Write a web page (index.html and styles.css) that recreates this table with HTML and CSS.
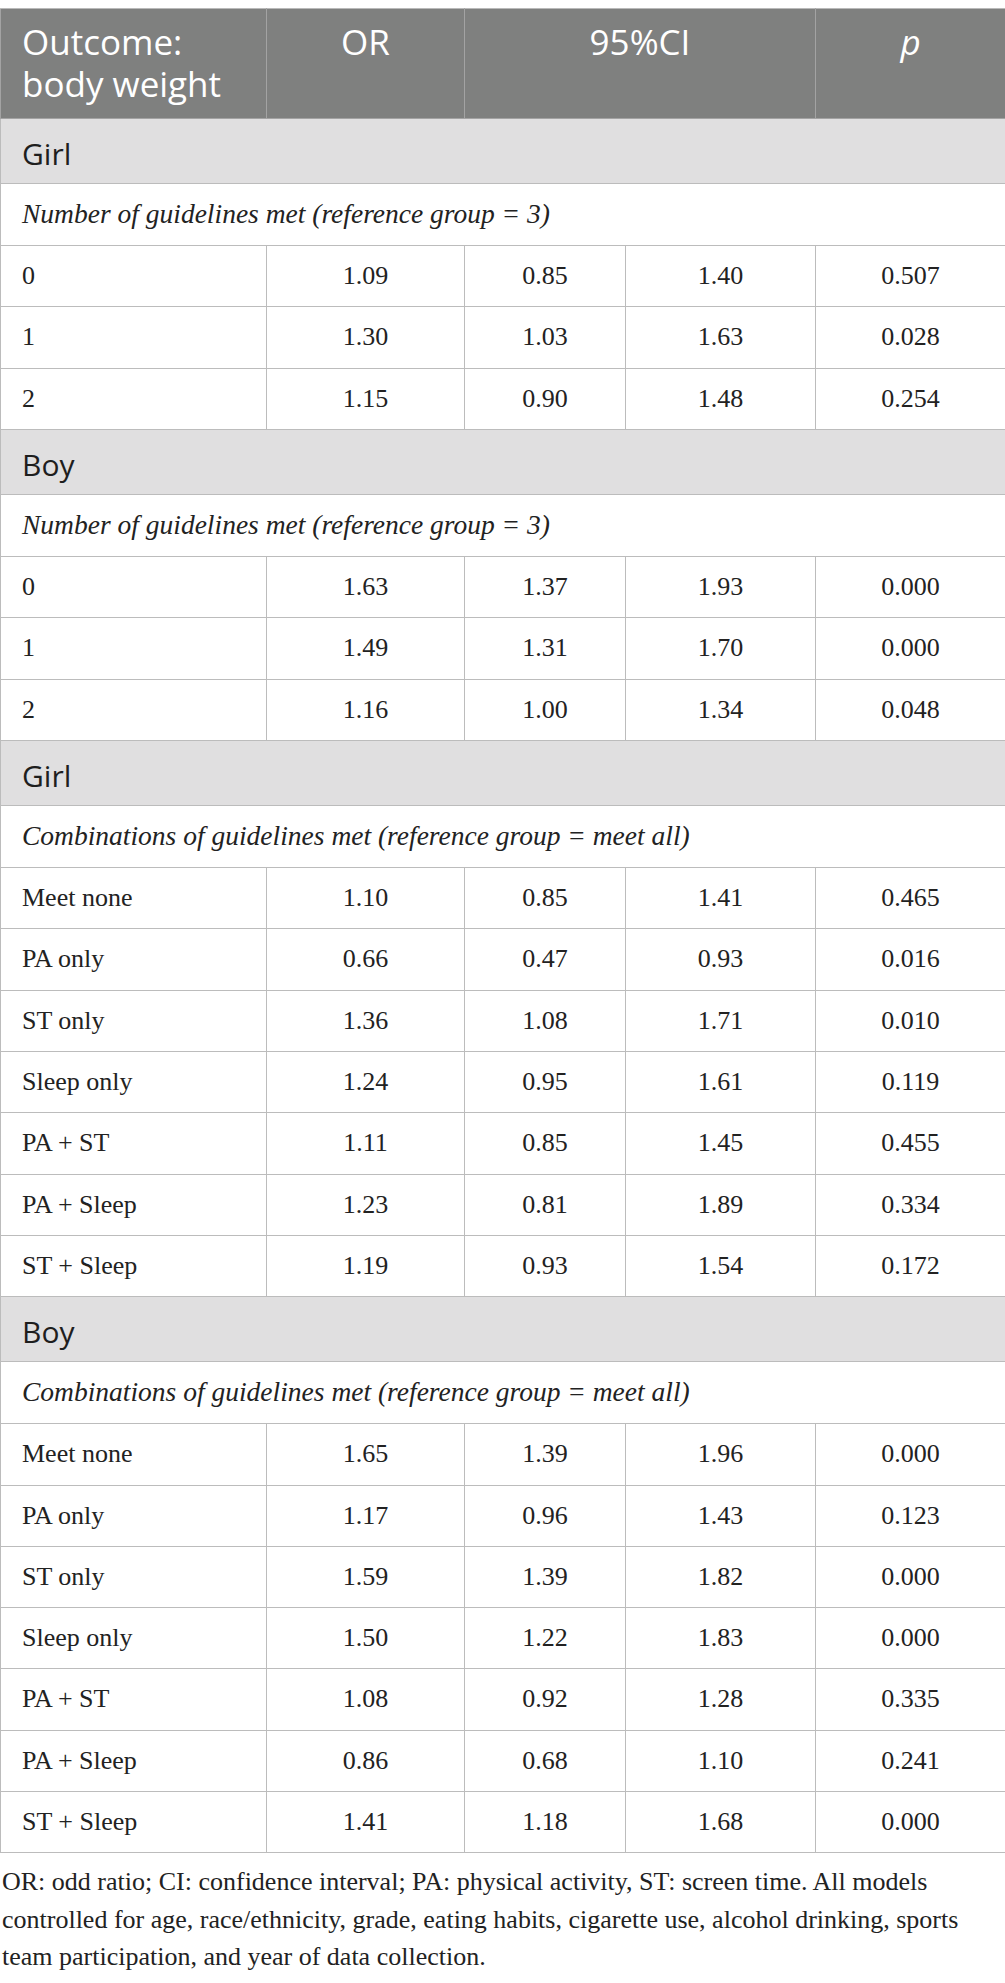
FILE: index.html
```html
<!DOCTYPE html>
<html lang="en">
<head>
<meta charset="utf-8">
<title>Table</title>
<link rel="stylesheet" href="styles.css">
</head>
<body>
<table class="results">
  <colgroup>
    <col class="c1"><col class="c2"><col class="c3"><col class="c4"><col class="c5">
  </colgroup>
  <thead>
    <tr>
      <th class="first">Outcome:<br>body weight</th>
      <th>OR</th>
      <th colspan="2">95%CI</th>
      <th><i>p</i></th>
    </tr>
  </thead>
  <tbody>
    <tr class="group"><td colspan="5">Girl</td></tr>
    <tr class="sub"><td colspan="5">Number of guidelines met (reference group = 3)</td></tr>
    <tr class="data"><td>0</td><td>1.09</td><td>0.85</td><td>1.40</td><td>0.507</td></tr>
    <tr class="data"><td>1</td><td>1.30</td><td>1.03</td><td>1.63</td><td>0.028</td></tr>
    <tr class="data"><td>2</td><td>1.15</td><td>0.90</td><td>1.48</td><td>0.254</td></tr>

    <tr class="group"><td colspan="5">Boy</td></tr>
    <tr class="sub"><td colspan="5">Number of guidelines met (reference group = 3)</td></tr>
    <tr class="data"><td>0</td><td>1.63</td><td>1.37</td><td>1.93</td><td>0.000</td></tr>
    <tr class="data"><td>1</td><td>1.49</td><td>1.31</td><td>1.70</td><td>0.000</td></tr>
    <tr class="data"><td>2</td><td>1.16</td><td>1.00</td><td>1.34</td><td>0.048</td></tr>

    <tr class="group"><td colspan="5">Girl</td></tr>
    <tr class="sub"><td colspan="5">Combinations of guidelines met (reference group = meet all)</td></tr>
    <tr class="data"><td>Meet none</td><td>1.10</td><td>0.85</td><td>1.41</td><td>0.465</td></tr>
    <tr class="data"><td>PA only</td><td>0.66</td><td>0.47</td><td>0.93</td><td>0.016</td></tr>
    <tr class="data"><td>ST only</td><td>1.36</td><td>1.08</td><td>1.71</td><td>0.010</td></tr>
    <tr class="data"><td>Sleep only</td><td>1.24</td><td>0.95</td><td>1.61</td><td>0.119</td></tr>
    <tr class="data"><td>PA + ST</td><td>1.11</td><td>0.85</td><td>1.45</td><td>0.455</td></tr>
    <tr class="data"><td>PA + Sleep</td><td>1.23</td><td>0.81</td><td>1.89</td><td>0.334</td></tr>
    <tr class="data"><td>ST + Sleep</td><td>1.19</td><td>0.93</td><td>1.54</td><td>0.172</td></tr>

    <tr class="group"><td colspan="5">Boy</td></tr>
    <tr class="sub"><td colspan="5">Combinations of guidelines met (reference group = meet all)</td></tr>
    <tr class="data"><td>Meet none</td><td>1.65</td><td>1.39</td><td>1.96</td><td>0.000</td></tr>
    <tr class="data"><td>PA only</td><td>1.17</td><td>0.96</td><td>1.43</td><td>0.123</td></tr>
    <tr class="data"><td>ST only</td><td>1.59</td><td>1.39</td><td>1.82</td><td>0.000</td></tr>
    <tr class="data"><td>Sleep only</td><td>1.50</td><td>1.22</td><td>1.83</td><td>0.000</td></tr>
    <tr class="data"><td>PA + ST</td><td>1.08</td><td>0.92</td><td>1.28</td><td>0.335</td></tr>
    <tr class="data"><td>PA + Sleep</td><td>0.86</td><td>0.68</td><td>1.10</td><td>0.241</td></tr>
    <tr class="data"><td>ST + Sleep</td><td>1.41</td><td>1.18</td><td>1.68</td><td>0.000</td></tr>
  </tbody>
</table>
<p class="note">OR: odd ratio; CI: confidence interval; PA: physical activity, ST: screen time. All models controlled for age, race/ethnicity, grade, eating habits, cigarette use, alcohol drinking, sports team participation, and year of data collection.</p>
</body>
</html>
```
FILE: styles.css
```css
html, body {
  margin: 0;
  padding: 0;
  background: #ffffff;
}

body {
  padding-top: 8px;
  font-family: "Liberation Serif", "Times New Roman", serif;
  color: #222222;
}

.results {
  width: 1005px;
  border-collapse: collapse;
  table-layout: fixed;
  border: 1px solid #b9b9b9;
}

.c1 { width: 266px; }
.c2 { width: 198px; }
.c3 { width: 161px; }
.c4 { width: 190px; }
.c5 { width: 190px; }

.results th {
  background: #7f807f;
  color: #ffffff;
  font-family: "Open Sans", "Liberation Sans", sans-serif;
  font-weight: 400;
  font-size: 35px;
  line-height: 42px;
  text-align: center;
  vertical-align: top;
  padding: 12px 10px 13px;
  border: 1px solid #a3a3a3;
  border-top-color: #b9b9b9;
}

.results th.first {
  text-align: left;
  padding-left: 21px;
}

.results th i {
  font-style: italic;
}

.results td {
  border: 1px solid #bcbcbc;
  padding: 15px 10px;
  text-align: center;
  font-size: 26px;
  line-height: 30.3px;
}

.results td:first-child {
  text-align: left;
  padding-left: 21px;
}

.group td {
  background: #e0dfe0;
  font-family: "Open Sans", "Liberation Sans", sans-serif;
  font-size: 30px;
  line-height: 34.3px;
  padding: 18px 10px 12px 21px;
  color: #1e1e1e;
}

.sub td {
  font-style: italic;
  font-size: 27.5px;
  line-height: 30.8px;
  padding: 15px 10px 15px 21px;
}

.note {
  margin: 10px 0 0;
  padding: 0 2px;
  font-size: 26px;
  line-height: 37.5px;
  color: #222222;
}
```
